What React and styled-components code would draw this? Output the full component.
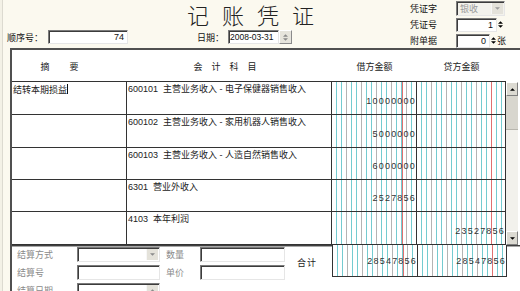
import React from "react";
import styled, { createGlobalStyle } from "styled-components";

const GlobalStyle = createGlobalStyle`
  html, body { margin: 0; padding: 0; }
  body {
    background: #fbf9ef;
    font-family: "Liberation Sans", "Noto Sans CJK SC", sans-serif;
  }
`;

const rows = [
  { summary: "结转本期损益", account: "600101  主营业务收入 - 电子保健器销售收入", debit: "10000000", credit: "", caret: true },
  { summary: "", account: "600102  主营业务收入 - 家用机器人销售收入", debit: "5000000", credit: "" },
  { summary: "", account: "600103  主营业务收入 - 人造自然销售收入", debit: "6000000", credit: "" },
  { summary: "", account: "6301  营业外收入", debit: "2527856", credit: "" },
  { summary: "", account: "4103  本年利润", debit: "", credit: "23527856" },
];
const rowHeights = [33, 33, 32, 32, 33];

const Page = styled.div`
  width: 520px;
  height: 291px;
  overflow: hidden;
  background: #fbf9ef;
  display: flex;
  flex-direction: column;
  font-size: 9px;
  color: #111;
  box-shadow: inset 2px 0 0 #f3f1e6, inset 3px 0 0 #dcdad0;
`;

const TopBar = styled.div`
  height: 48px;
  display: flex;
`;

const LeftCol = styled.div`
  width: 410px;
  display: flex;
  flex-direction: column;
`;

const Title = styled.div`
  height: 30px;
  padding-left: 187px;
  font-family: "Noto Sans CJK SC", serif;
  font-weight: 300;
  font-size: 22px;
  line-height: 28px;
  letter-spacing: 13px;
  color: #222;
`;

const InfoRow = styled.div`
  height: 14px;
  display: flex;
  align-items: center;
  padding-left: 7px;
`;

const Label = styled.span`
  width: ${(p) => p.w}px;
  margin-left: ${(p) => p.ml || 0}px;
  flex-shrink: 0;
  white-space: nowrap;
  color: ${(p) => (p.muted ? "#8a8a8a" : "#111")};
`;

const Field = styled.div`
  box-sizing: border-box;
  width: ${(p) => p.w}px;
  height: ${(p) => p.h || 14}px;
  background: ${(p) => (p.disabled ? "#f3f2ec" : "#fff")};
  border: 1px solid;
  border-color: #7b7b7b #e6e6e6 #e6e6e6 #7b7b7b;
  box-shadow: inset 1px 1px 0 #3c3c3c;
  display: flex;
  align-items: center;
  justify-content: ${(p) => (p.left ? "flex-start" : "flex-end")};
  padding: 0 ${(p) => (p.tight ? 1 : 3)}px;
  color: ${(p) => (p.disabled ? "#9a9a9a" : "#111")};
  font-size: ${(p) => (p.tight ? 8.5 : 9)}px;
  white-space: nowrap;
  overflow: hidden;
  flex-shrink: 0;
  position: relative;
`;

const DropBtn = styled.div`
  position: absolute;
  right: 1px;
  top: 1px;
  bottom: 1px;
  width: 11px;
  background: #e4e2da;
  border-left: 1px solid #f7f7f7;
  display: flex;
  align-items: center;
  justify-content: center;
`;

const SpinBtn = styled.div`
  box-sizing: border-box;
  width: ${(p) => p.w}px;
  height: 14px;
  background: ${(p) => (p.flat ? "transparent" : "#e6e4dc")};
  border: ${(p) => (p.flat ? "none" : "1px solid")};
  border-color: #fff #8a8a8a #8a8a8a #fff;
  display: flex;
  flex-direction: column;
  align-items: center;
  justify-content: center;
  gap: 1px;
  flex-shrink: 0;
`;

const RightCol = styled.div`
  width: 110px;
  display: flex;
  flex-direction: column;
  padding-top: 1px;
  gap: 1px;
`;

const RightRow = styled.div`
  height: 15px;
  display: flex;
  align-items: center;
`;

const Panel = styled.div`
  flex: 1;
  margin-left: 10px;
  border-top: 2px solid #505050;
  border-left: 2px solid #505050;
  background: #fff;
  display: flex;
  flex-direction: column;
`;

const cols = "115px 205px 85px 89px";

const HeaderRow = styled.div`
  display: grid;
  grid-template-columns: ${cols} 12px;
  height: 32px;
`;

const HeadCell = styled.div`
  border-bottom: ${(p) => (p.bare ? "none" : "1px solid #333")};
  display: flex;
  align-items: center;
  justify-content: center;
  padding-top: 1px;
  letter-spacing: ${(p) => p.ls || 0}px;
  color: #222;
`;

const Body = styled.div`
  display: flex;
  height: 163px;
`;

const Rows = styled.div`
  display: flex;
  flex-direction: column;
`;

const Row = styled.div`
  display: grid;
  grid-template-columns: ${cols};
  height: ${(p) => p.h}px;
  box-sizing: border-box;
  border-bottom: 1px solid #333;
`;

const TextCell = styled.div`
  border-right: 1px solid #333;
  padding: 2px 1px;
  line-height: 11px;
  white-space: pre;
  overflow: hidden;
  color: #222;
`;

const Caret = styled.span`
  display: inline-block;
  width: 1px;
  height: 10px;
  background: #111;
  vertical-align: -1px;
`;

const ruled = `
  background:
    linear-gradient(#e07070, #e07070) right 13px top 0 / 1px 100% no-repeat,
    repeating-linear-gradient(to right, transparent 0 14px, #b4b4b4 14px 15px),
    repeating-linear-gradient(to right, transparent 0 4px, #74cbd0 4px 5px),
    #fff;
`;

const AmountCell = styled.div`
  ${ruled}
  border-right: 1px solid #333;
  display: flex;
  align-items: center;
  justify-content: flex-end;
  padding-top: ${(p) => p.pt || 5}px;
  font-size: 9px;
  letter-spacing: 1.2px;
  color: #333;
`;

const Scrollbar = styled.div`
  width: 12px;
  display: flex;
  flex-direction: column;
  background: #f2f1ec;
`;

const ScrollBtn = styled.div`
  box-sizing: border-box;
  height: 14px;
  background: #dcdad2;
  border: 1px solid;
  border-color: #fff #808080 #808080 #fff;
  display: flex;
  align-items: center;
  justify-content: center;
`;

const Thumb = styled.div`
  height: 33px;
  background: #d8d6ce;
  border-bottom: 1px solid #b8b6ae;
`;

const Track = styled.div`
  flex: 1;
`;

const BottomRule = styled.div`
  height: 1px;
  background: #404040;
  border-bottom: 1px solid #a8a8a8;
`;

const Footer = styled.div`
  flex: 1;
  display: flex;
  align-items: flex-start;
`;

const FormGrid = styled.div`
  display: grid;
  grid-template-columns: 60px 83px 6px 34px 85px;
  grid-auto-rows: 15px;
  row-gap: 3px;
  margin-left: 5px;
  align-items: center;
`;

const TotalLabel = styled.div`
  margin-left: 12px;
  width: 35px;
  padding-top: 9px;
  color: #222;
  letter-spacing: 1px;
`;

const TotalBox = styled.div`
  display: grid;
  grid-template-columns: 85px 89px;
  height: 31px;
  border-left: 1px solid #333;
  border-bottom: 1px solid #333;
  margin-top: -2px;
`;

const Tri = ({ up, color = "#000", w = 5 }) => (
  <svg width={w} height={3} viewBox="0 0 6 3">
    <path d={up ? "M0 3 L3 0 L6 3 Z" : "M0 0 L3 3 L6 0 Z"} fill={color} />
  </svg>
);

const Spinner = ({ flat, w }) => (
  <SpinBtn flat={flat} w={w}>
    <Tri up color={flat ? "#000" : "#8a8a8a"} />
    <Tri color={flat ? "#000" : "#8a8a8a"} />
  </SpinBtn>
);

export default function App() {
  return (
    <Page>
      <GlobalStyle />
      <TopBar>
        <LeftCol>
          <Title>记账凭证</Title>
          <InfoRow>
            <Label w={41}>顺序号：</Label>
            <Field w={80}>74</Field>
            <Label w={31} ml={69}>日期：</Label>
            <Field w={51} left tight>2008-03-31</Field>
            <Spinner w={13} />
          </InfoRow>
        </LeftCol>
        <RightCol>
          <RightRow>
            <Label w={46}>凭证字</Label>
            <Field w={49} h={15} left disabled>
              银收
              <DropBtn>
                <Tri color="#9a9a9a" />
              </DropBtn>
            </Field>
          </RightRow>
          <RightRow>
            <Label w={46}>凭证号</Label>
            <Field w={41}>1</Field>
            <Spinner flat w={7} />
          </RightRow>
          <RightRow>
            <Label w={46}>附单据</Label>
            <Field w={34}>0</Field>
            <Spinner flat w={7} />
            <Label w={10}>张</Label>
          </RightRow>
        </RightCol>
      </TopBar>

      <Panel>
        <HeaderRow>
          <HeadCell ls={20}>摘要</HeadCell>
          <HeadCell ls={9}>会计科目</HeadCell>
          <HeadCell>借方金额</HeadCell>
          <HeadCell>贷方金额</HeadCell>
          <HeadCell bare />
        </HeaderRow>
        <Body>
          <Rows>
            {rows.map((r, i) => (
              <Row key={i} h={rowHeights[i]}>
                <TextCell>
                  {r.summary}
                  {r.caret && <Caret />}
                </TextCell>
                <TextCell>{r.account}</TextCell>
                <AmountCell>{r.debit}</AmountCell>
                <AmountCell>{r.credit}</AmountCell>
              </Row>
            ))}
          </Rows>
          <Scrollbar>
            <ScrollBtn>
              <Tri up />
            </ScrollBtn>
            <Thumb />
            <Track />
            <ScrollBtn>
              <Tri />
            </ScrollBtn>
          </Scrollbar>
        </Body>
        <BottomRule />
        <Footer>
          <FormGrid>
            <Label muted>结算方式</Label>
            <Field w={83} h={15}>
              <DropBtn>
                <Tri color="#8a8a8a" />
              </DropBtn>
            </Field>
            <span />
            <Label muted>数量</Label>
            <Field w={85} h={15} />
            <Label muted>结算号</Label>
            <Field w={83} h={15} />
            <span />
            <Label muted>单价</Label>
            <Field w={85} h={15} />
            <Label muted>结算日期</Label>
            <Field w={83} h={15}>
              <DropBtn>
                <Tri up color="#8a8a8a" />
              </DropBtn>
            </Field>
          </FormGrid>
          <TotalLabel>合计</TotalLabel>
          <TotalBox>
            <AmountCell pt={1}>28547856</AmountCell>
            <AmountCell pt={1}>28547856</AmountCell>
          </TotalBox>
        </Footer>
      </Panel>
    </Page>
  );
}
